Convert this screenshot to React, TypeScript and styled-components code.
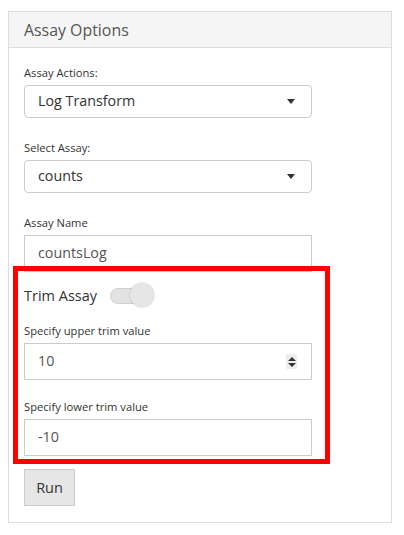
import React from "react";
import styled, { createGlobalStyle } from "styled-components";

const Global = createGlobalStyle`
  html, body { margin: 0; padding: 0; background: #fff; }
  body { font-family: "Open Sans", "Noto Sans", sans-serif; color: #333; }
  * { box-sizing: border-box; }
`;

const Page = styled.div`
  padding: 11px 12px 0 8px;
  width: 404px;
`;

const Panel = styled.section`
  width: 384px;
  border: 1px solid #dddddd;
  background: #fff;
`;

const PanelHeader = styled.div`
  height: 36px;
  background: #f5f5f5;
  border-bottom: 1px solid #dddddd;
  padding: 0 15px;
  display: flex;
  align-items: center;
  font-size: 15.9px;
  color: #555;
`;

const PanelBody = styled.div`
  position: relative;
  padding: 16px 15px 16px 15px;
  display: flex;
  flex-direction: column;
`;

const Group = styled.div<{ $mb: number }>`
  display: flex;
  flex-direction: column;
  margin-bottom: ${(p) => p.$mb}px;
`;

const Label = styled.label<{ $mb?: number }>`
  font-size: 11.2px;
  line-height: 17px;
  color: #333;
  margin-bottom: ${(p) => p.$mb ?? 4}px;
`;

const Field = styled.div<{ $h: number; $radius?: number }>`
  width: 288px;
  height: ${(p) => p.$h}px;
  border: 1px solid #cccccc;
  border-radius: ${(p) => p.$radius ?? 0}px;
  background: #fff;
  display: flex;
  align-items: center;
  justify-content: space-between;
  padding: 0 14px 0 13px;
  font-size: 14.3px;
`;

const FieldText = styled.span<{ $muted?: boolean }>`
  color: ${(p) => (p.$muted ? "#555" : "#333")};
  line-height: 1;
`;

const Caret = styled.span`
  width: 0;
  height: 0;
  border-left: 4.5px solid transparent;
  border-right: 4.5px solid transparent;
  border-top: 5px solid #333;
  margin-right: 2px;
`;

const Spinner = styled.span`
  width: 11px;
  height: 15px;
  background: #eeeeee;
  display: flex;
  flex-direction: column;
  align-items: center;
  justify-content: center;
  gap: 2px;
`;

const Tri = styled.span<{ $up?: boolean }>`
  width: 0;
  height: 0;
  border-left: 4px solid transparent;
  border-right: 4px solid transparent;
  ${(p) => (p.$up ? "border-bottom: 4px solid #333;" : "border-top: 4px solid #333;")}
`;

const SwitchRow = styled.div`
  display: flex;
  align-items: center;
  height: 27px;
  margin-top: 10px;
  margin-bottom: 13px;
  gap: 13px;
`;

const SwitchText = styled.span`
  font-size: 14.5px;
  color: #333;
`;

const Switch = styled.span`
  position: relative;
  width: 44px;
  height: 27px;
  display: flex;
  align-items: center;
`;

const Track = styled.span`
  width: 36px;
  height: 16px;
  border-radius: 8px;
  background: #e3e3e3;
  border: 1px solid #d0d0d0;
`;

const Knob = styled.span`
  position: absolute;
  right: 0;
  top: 1px;
  width: 24px;
  height: 24px;
  border-radius: 50%;
  background: #e6e6e6;
  box-shadow: 0 0 2px rgba(0, 0, 0, 0.25);
`;

const RunButton = styled.button`
  align-self: flex-start;
  width: 51px;
  height: 37px;
  border: 1px solid #cccccc;
  background: #e6e6e6;
  font-family: inherit;
  font-size: 14.5px;
  color: #333;
  padding: 0;
`;

const Highlight = styled.div`
  position: absolute;
  left: 4px;
  top: 218px;
  width: 317px;
  height: 198px;
  border: 5px solid #ff0000;
  pointer-events: none;
`;

export default function App() {
  return (
    <>
      <Global />
      <Page>
        <Panel>
          <PanelHeader>Assay Options</PanelHeader>
          <PanelBody>
            <Group $mb={21}>
              <Label>Assay Actions:</Label>
              <Field $h={33} $radius={4}>
                <FieldText>Log Transform</FieldText>
                <Caret />
              </Field>
            </Group>
            <Group $mb={21}>
              <Label>Select Assay:</Label>
              <Field $h={33} $radius={4}>
                <FieldText>counts</FieldText>
                <Caret />
              </Field>
            </Group>
            <Group $mb={0}>
              <Label>Assay Name</Label>
              <Field $h={37}>
                <FieldText $muted>countsLog</FieldText>
              </Field>
            </Group>
            <SwitchRow>
              <SwitchText>Trim Assay</SwitchText>
              <Switch>
                <Track />
                <Knob />
              </Switch>
            </SwitchRow>
            <Group $mb={18}>
              <Label>Specify upper trim value</Label>
              <Field $h={37}>
                <FieldText $muted>10</FieldText>
                <Spinner>
                  <Tri $up />
                  <Tri />
                </Spinner>
              </Field>
            </Group>
            <Group $mb={13}>
              <Label>Specify lower trim value</Label>
              <Field $h={37}>
                <FieldText $muted>-10</FieldText>
              </Field>
            </Group>
            <RunButton>Run</RunButton>
            <Highlight />
          </PanelBody>
        </Panel>
      </Page>
    </>
  );
}
